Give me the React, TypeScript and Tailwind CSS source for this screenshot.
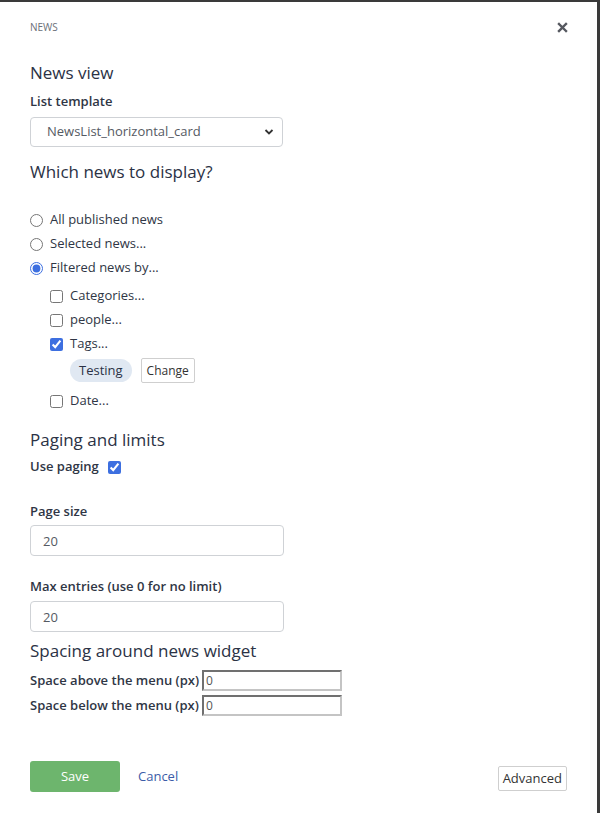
import React from "react";

function Radio({ checked, label }: { checked?: boolean; label: string }) {
  return (
    <label className="flex h-[24px] items-center">
      <input type="radio" name="which" defaultChecked={checked} className="m-0 h-[13px] w-[13px] accent-[#3d6fe0]" />
      <span className="ml-[7px]">{label}</span>
    </label>
  );
}

function Check({ checked, label, className = "" }: { checked?: boolean; label: string; className?: string }) {
  return (
    <label className={"flex h-[24px] items-center " + className}>
      <input type="checkbox" defaultChecked={checked} className="m-0 h-[13px] w-[13px] accent-[#3d6fe0]" />
      <span className="ml-[7px]">{label}</span>
    </label>
  );
}

export default function App() {
  return (
    <div className="min-h-[813px] bg-[#3a3a3a] pt-[2px] pr-[3px]" style={{ fontFamily: '"Open Sans", "Noto Sans", sans-serif' }}>
      <div className="h-[811px] bg-white px-[30px] pt-[18px] text-[13px] text-[#2f3645]">
        <div className="flex items-center justify-between">
          <span className="text-[10px] leading-[14px] text-[#6b6f78]">NEWS</span>
          <svg width="11" height="11" viewBox="0 0 11 11" className="mr-[-1px]">
            <path d="M2 2 L9 9 M9 2 L2 9" stroke="#55585f" strokeWidth="2.4" strokeLinecap="square" />
          </svg>
        </div>

        <h2 className="mt-[27px] text-[17px] font-normal leading-[24px] text-[#2b3245]">News view</h2>
        <div className="mt-[7px] font-semibold leading-[18px]">List template</div>
        <div className="mt-[7px] flex h-[30px] w-[253px] items-center justify-between rounded-[4px] border border-[#cfd2d6] pl-[16px] pr-[8px] text-[#555a63]">
          <span>NewsList_horizontal_card</span>
          <svg width="10" height="10" viewBox="0 0 10 10">
            <path d="M1.5 3 L5 6.5 L8.5 3" stroke="#333" strokeWidth="1.8" fill="none" />
          </svg>
        </div>

        <h2 className="mt-[13px] text-[17px] font-normal leading-[24px] text-[#2b3245]">Which news to display?</h2>

        <div className="mt-[24px]">
          <Radio label="All published news" />
          <Radio label="Selected news..." />
          <Radio checked label="Filtered news by..." />
        </div>

        <div className="mt-[4px] pl-[20px]">
          <Check label="Categories..." />
          <Check label="people..." />
          <Check checked label="Tags..." />
          <div className="mt-[2px] flex h-[25px] items-center pl-[20px]">
            <span className="flex h-[23px] items-center rounded-full bg-[#e0e8f2] px-[9px] font-medium text-[#2b3245]">Testing</span>
            <button className="ml-[9px] h-[25px] rounded-[2px] border border-[#cfcfcf] bg-white px-[5px] text-[12px] text-[#333]">Change</button>
          </div>
          <Check label="Date..." className="mt-[6px]" />
        </div>

        <h2 className="mt-[15px] text-[17px] font-normal leading-[24px] text-[#2b3245]">Paging and limits</h2>
        <label className="mt-[6px] flex h-[18px] items-center font-semibold">
          Use paging
          <input type="checkbox" defaultChecked className="m-0 ml-[9px] h-[13px] w-[13px] accent-[#3d6fe0]" />
        </label>

        <div className="mt-[26px] font-semibold leading-[18px]">Page size</div>
        <input defaultValue="20" className="mt-[5px] block h-[31px] w-[254px] rounded-[4px] border border-[#cfd2d6] px-[12px] text-[13px] text-[#555a63] outline-none" />

        <div className="mt-[21px] font-semibold leading-[18px]">Max entries (use 0 for no limit)</div>
        <input defaultValue="20" className="mt-[6px] block h-[31px] w-[254px] rounded-[4px] border border-[#cfd2d6] px-[12px] text-[13px] text-[#555a63] outline-none" />

        <h2 className="mt-[7px] text-[17px] font-normal leading-[24px] text-[#2b3245]">Spacing around news widget</h2>
        <div className="mt-[7px] flex h-[21px] items-center">
          <span className="w-[172px] font-semibold">Space above the menu (px)</span>
          <input defaultValue="0" className="h-[21px] w-[140px] border-2 border-[#c4c4c4] [border-style:inset] px-[2px] text-[12px] text-[#555] outline-none" />
        </div>
        <div className="mt-[4px] flex h-[21px] items-center">
          <span className="w-[172px] font-semibold">Space below the menu (px)</span>
          <input defaultValue="0" className="h-[21px] w-[140px] border-2 border-[#c4c4c4] [border-style:inset] px-[2px] text-[12px] text-[#555] outline-none" />
        </div>

        <div className="mt-[45px] flex items-end justify-between">
          <div className="flex items-center">
            <button className="h-[31px] w-[90px] rounded-[3px] bg-[#6db56d] text-[13px] text-white">Save</button>
            <span className="ml-[18px] text-[#3c5ca8]">Cancel</span>
          </div>
          <button className="mb-[1px] h-[25px] rounded-[2px] border border-[#cfcfcf] bg-white px-[4px] text-[13px] text-[#333]">Advanced</button>
        </div>
      </div>
    </div>
  );
}
